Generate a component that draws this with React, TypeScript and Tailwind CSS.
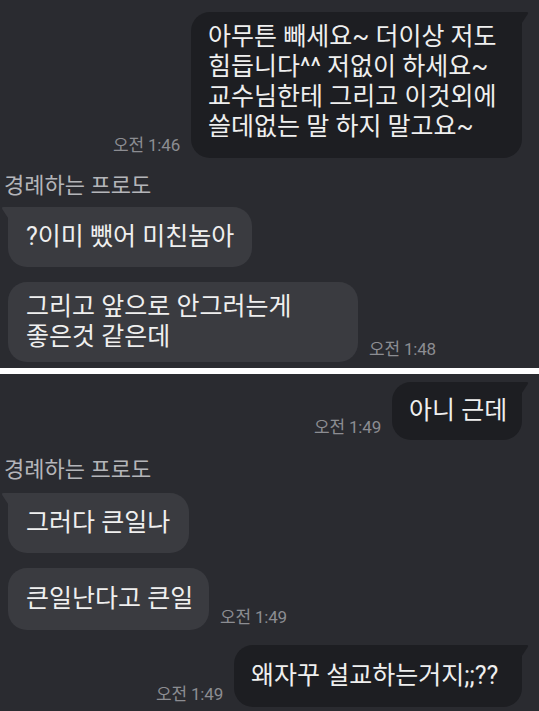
import React from "react";

const font = { fontFamily: 'Roboto, "Noto Sans CJK KR", sans-serif' };

function SentTail() {
  return (
    <svg className="absolute top-0 -right-[7px]" width="9" height="14" viewBox="0 0 9 14">
      <path d="M0 0 H6.5 Q9 0 7.6 2.2 L0 14 Z" fill="#1d1e22" />
    </svg>
  );
}

function RecvTail() {
  return (
    <svg className="absolute top-0 -left-[7px]" width="9" height="14" viewBox="0 0 9 14">
      <path d="M9 0 H2.5 Q0 0 1.4 2.2 L9 14 Z" fill="#3a3b40" />
    </svg>
  );
}

function Time({ children }: { children: React.ReactNode }) {
  return (
    <span className="mb-[3px] text-[17px] leading-[20px] text-[#8c8d92] whitespace-nowrap tracking-[-0.2px]">
      {children}
    </span>
  );
}

function Lines({ lines }: { lines: string[] }) {
  return (
    <>
      {lines.map((l) => (
        <div key={l} className="h-[30px] leading-[30px]">
          {l}
        </div>
      ))}
    </>
  );
}

function Sent({
  time,
  width,
  pad,
  lines,
}: {
  time: string;
  width: string;
  pad: string;
  lines: string[];
}) {
  return (
    <div className="flex justify-end items-end gap-[11px] pr-[17px]">
      <Time>{time}</Time>
      <div
        className={`relative bg-[#1d1e22] rounded-[19px] rounded-tr-none pl-[17px] text-[25px] text-[#efefef] whitespace-nowrap ${width} ${pad}`}
      >
        <SentTail />
        <Lines lines={lines} />
      </div>
    </div>
  );
}

function Recv({
  time,
  width,
  pad,
  tail = false,
  lines,
}: {
  time?: string;
  width: string;
  pad: string;
  tail?: boolean;
  lines: string[];
}) {
  return (
    <div className="flex items-end gap-[11px] pl-[8px]">
      <div
        className={`relative bg-[#3a3b40] rounded-[19px] pl-[18px] text-[25px] text-[#efefef] whitespace-nowrap ${
          tail ? "rounded-tl-none" : ""
        } ${width} ${pad}`}
      >
        {tail && <RecvTail />}
        <Lines lines={lines} />
      </div>
      {time && <Time>{time}</Time>}
    </div>
  );
}

function Name() {
  return (
    <div className="pl-[4px] text-[22px] leading-[26px] text-[#b4b5b9]">
      경례하는 프로도
    </div>
  );
}

export default function App() {
  return (
    <div className="w-[539px] h-[711px] bg-white flex flex-col overflow-hidden" style={font}>
      {/* first capture */}
      <div className="h-[368px] bg-[#2a2b30] overflow-hidden pt-[12px]">
        <Sent
          time="오전 1:46"
          width="w-[331px]"
          pad="pt-[10px] pb-[16px]"
          lines={[
            "아무튼 빼세요~ 더이상 저도",
            "힘듭니다^^ 저없이 하세요~",
            "교수님한테 그리고 이것외에",
            "쓸데없는 말 하지 말고요~",
          ]}
        />
        <div className="mt-[15px] mb-[8px]">
          <Name />
        </div>
        <div className="flex flex-col gap-[15px]">
          <Recv width="w-[244px]" pad="py-[15px]" tail lines={["?이미 뺐어 미친놈아"]} />
          <Recv
            time="오전 1:48"
            width="w-[350px]"
            pad="py-[10px]"
            lines={["그리고 앞으로 안그러는게", "좋은것 같은데"]}
          />
        </div>
      </div>

      <div className="h-[6px] bg-white" />

      {/* second capture */}
      <div className="flex-1 bg-[#2a2b30] overflow-hidden pt-[8px]">
        <Sent time="오전 1:49" width="w-[130px]" pad="py-[14px]" lines={["아니 근데"]} />
        <div className="mt-[17px] mb-[10px]">
          <Name />
        </div>
        <div className="flex flex-col gap-[15px]">
          <Recv width="w-[181px]" pad="py-[15px]" tail lines={["그러다 큰일나"]} />
          <Recv time="오전 1:49" width="w-[201px]" pad="py-[16px]" lines={["큰일난다고 큰일"]} />
        </div>
        <div className="mt-[15px]">
          <Sent time="오전 1:49" width="w-[288px]" pad="py-[16px]" lines={["왜자꾸 설교하는거지;;??"]} />
        </div>
      </div>
    </div>
  );
}
